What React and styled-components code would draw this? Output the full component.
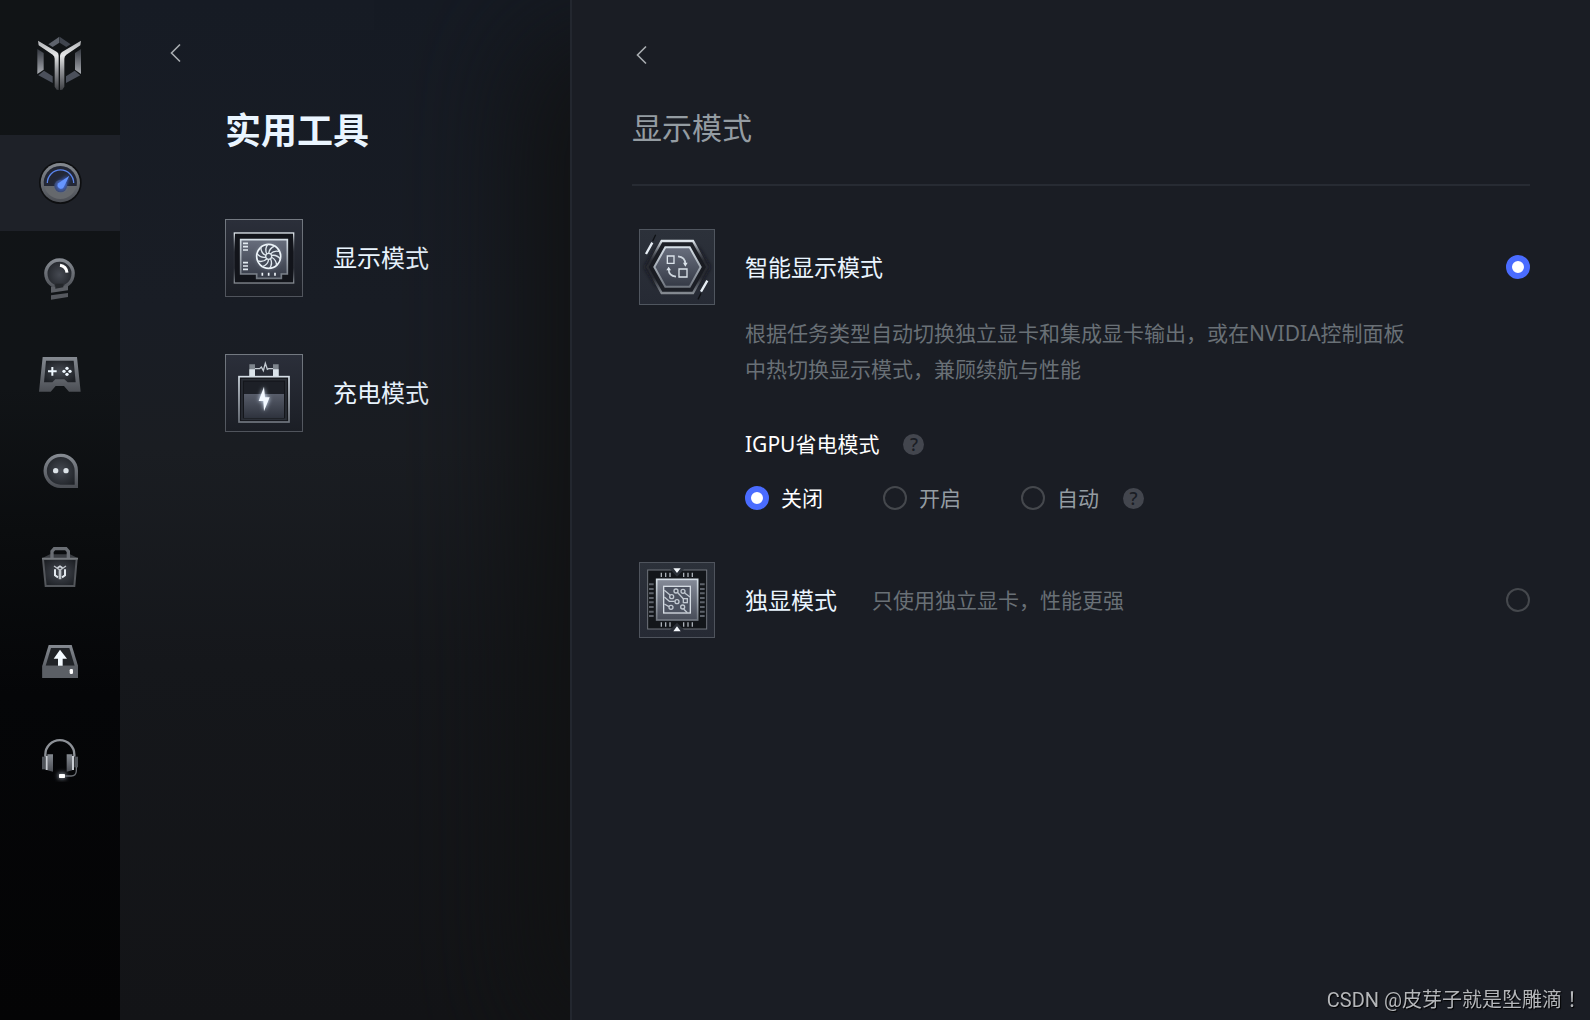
import React, { useState } from 'react';
import styled, { createGlobalStyle } from 'styled-components';

const colors = {
  panel: '#1a1d24',
  line: '#23272f',
  divider: '#272b33',
  heading: '#eaf5ff',
  text: '#ffffff',
  soft: '#949ca2',
  muted: '#697076',
  accent: '#4a6cff',
};

const GlobalStyle = createGlobalStyle`
  * {
    box-sizing: border-box;
  }

  body {
    margin: 0;
    background: ${colors.panel};
    color: ${colors.text};
    font-family: 'Noto Sans', 'Noto Sans CJK SC', sans-serif;
  }

  h1, h2, h3, p, ul {
    margin: 0;
    padding: 0;
    font-weight: 400;
  }
`;

const Layout = styled.div`
  display: grid;
  grid-template-columns: 120px 450px 1fr;
  min-height: 100vh;
`;

const Sidebar = styled.nav`
  background: linear-gradient(180deg, #111416 0%, #111417 38%, #0b0d0f 52%, #050608 68%, #040405 100%);
`;

const Brand = styled.div`
  display: flex;
  justify-content: center;
  height: 135px;
  padding: 36px 2px 0 0;
`;

const NavButton = styled.button`
  display: flex;
  align-items: center;
  justify-content: center;
  width: 100%;
  height: 96px;
  padding: 0;
  border: 0;
  background: ${({ $active }) => ($active ? '#1e2128' : 'transparent')};
  cursor: pointer;
`;

const ToolsPanel = styled.section`
  padding: 41px 24px 24px 46px;
  background: linear-gradient(180deg, #161b24 0%, #191d25 30%, #1a1d22 44%, #15171b 65%, #131417 100%);
`;

const DetailPanel = styled.main`
  padding: 43px 60px 24px;
  border-left: 2px solid ${colors.line};
  background: ${colors.panel};
  box-shadow: -50px 30px 120px #111213;
`;

const BackButton = styled.button`
  display: flex;
  align-items: center;
  justify-content: center;
  width: 20px;
  height: 24px;
  padding: 0;
  border: 0;
  background: none;
  color: #a9adb1;
  cursor: pointer;
`;

const ToolsBody = styled.div`
  padding-left: 59px;
`;

const ToolsTitle = styled.h1`
  margin: 46px 0 68px;
  font-size: 36px;
  font-weight: 700;
  line-height: 40px;
  color: ${colors.heading};
`;

const ToolList = styled.ul`
  display: grid;
  gap: 57px;
  list-style: none;
`;

const ToolButton = styled.button`
  display: flex;
  align-items: center;
  gap: 30px;
  padding: 0;
  border: 0;
  background: none;
  color: ${colors.heading};
  font: inherit;
  font-size: 24px;
  line-height: 36px;
  cursor: pointer;
`;

const DetailTitle = styled.h2`
  padding: 41px 0 36px;
  border-bottom: 2px solid ${colors.divider};
  font-size: 30px;
  line-height: 40px;
  color: ${colors.soft};
`;

const Modes = styled.div`
  display: grid;
  gap: 49px;
  padding: 43px 0 0 7px;
`;

const ModeHead = styled.label`
  display: flex;
  align-items: center;
  cursor: pointer;
`;

const ModeName = styled.span`
  margin-left: 30px;
  font-size: 23px;
  line-height: 36px;
  color: ${colors.heading};
`;

const ModeHint = styled.span`
  margin-left: 35px;
  font-size: 21px;
  line-height: 36px;
  color: ${colors.muted};
`;

const ModeBody = styled.div`
  padding: 10px 0 0 106px;
`;

const Description = styled.p`
  max-width: 670px;
  font-size: 21px;
  line-height: 36px;
  color: ${colors.muted};
`;

const OptionTitle = styled.div`
  display: flex;
  align-items: center;
  gap: 24px;
  margin: 42px 0 24px;
  font-size: 21px;
  line-height: 30px;
`;

const Options = styled.div`
  display: flex;
  gap: 60px;
`;

const OptionGroup = styled.div`
  display: flex;
  align-items: center;
  gap: 24px;
`;

const Option = styled.label`
  display: flex;
  align-items: center;
  gap: 12px;
  font-size: 21px;
  line-height: 30px;
  color: ${({ $active }) => ($active ? colors.text : colors.soft)};
  cursor: pointer;
`;

const Radio = styled.input.attrs({ type: 'radio' })`
  appearance: none;
  flex: none;
  width: 24px;
  height: 24px;
  margin: 0;
  border: 2px solid #45484d;
  border-radius: 50%;
  cursor: pointer;

  &:checked {
    border: 6px solid ${colors.accent};
    background: #fff;
  }
`;

const ModeRadio = styled(Radio)`
  margin-left: auto;
`;

const HelpButton = styled.button`
  width: 21px;
  height: 21px;
  padding: 0;
  border: 0;
  border-radius: 50%;
  background: #43464e;
  color: ${colors.panel};
  font: inherit;
  font-size: 18px;
  font-weight: 500;
  line-height: 21px;
  text-align: center;
  cursor: pointer;
`;

const Watermark = styled.div`
  position: fixed;
  right: 8px;
  bottom: 5px;
  font-family: Roboto, 'Noto Sans CJK TC', sans-serif;
  font-size: 20px;
  line-height: 30px;
  color: #b4b6b9;
  text-shadow: 1px 1px 1px #000;
  pointer-events: none;
`;

const HiddenSvg = styled.svg`
  position: absolute;
`;

const Chevron = () => (
  <svg width="20" height="24" viewBox="2 0 20 24" fill="none" stroke="currentColor" strokeWidth="1.6" aria-hidden="true">
    <path d="M16 3.5 7.5 12 16 20.5" />
  </svg>
);

// gradients and filters shared by all icons
const Defs = () => (
  <HiddenSvg width="0" height="0" aria-hidden="true">
    <defs>
      <linearGradient id="metal" x1="0" y1="0" x2="0" y2="1">
        <stop offset="0" stopColor="#858a91" />
        <stop offset="1" stopColor="#4b4e54" />
      </linearGradient>
      <linearGradient id="silver" x1="0" y1="0" x2="0" y2="1">
        <stop offset="0" stopColor="#b0b2b5" />
        <stop offset="0.3" stopColor="#e6e7e8" />
        <stop offset="0.6" stopColor="#94969a" />
        <stop offset="1" stopColor="#3d3f43" />
      </linearGradient>
      <linearGradient id="side" x1="0" y1="0" x2="0" y2="1">
        <stop offset="0" stopColor="#343840" />
        <stop offset="1" stopColor="#a9acb1" />
      </linearGradient>
      <radialGradient id="well" cx="0.5" cy="0.5" r="0.6">
        <stop offset="0" stopColor="#454951" />
        <stop offset="1" stopColor="#1d2025" />
      </radialGradient>
      <linearGradient id="tile" x1="0" y1="0" x2="0" y2="1">
        <stop offset="0" stopColor="#2b2f3a" />
        <stop offset="1" stopColor="#1b1e25" />
      </linearGradient>
      <linearGradient id="modeTile" x1="0" y1="0" x2="0" y2="1">
        <stop offset="0" stopColor="#2c313a" />
        <stop offset="1" stopColor="#262a34" />
      </linearGradient>
      <linearGradient id="tileEdge" x1="0" y1="0" x2="0" y2="1">
        <stop offset="0" stopColor="#737981" />
        <stop offset="1" stopColor="#50545c" />
      </linearGradient>
      <linearGradient id="frame" x1="0" y1="0" x2="0" y2="1">
        <stop offset="0" stopColor="#dfe6ec" />
        <stop offset="0.38" stopColor="#5f656d" stopOpacity="0.2" />
        <stop offset="0.7" stopColor="#5f656d" stopOpacity="0.2" />
        <stop offset="1" stopColor="#858a91" />
      </linearGradient>
      <linearGradient id="plate" x1="0" y1="0" x2="0" y2="1">
        <stop offset="0" stopColor="#686e7d" />
        <stop offset="1" stopColor="#353a46" />
      </linearGradient>
      <linearGradient id="chip" x1="0" y1="0" x2="0" y2="1">
        <stop offset="0" stopColor="#858b98" />
        <stop offset="1" stopColor="#474c58" />
      </linearGradient>
      <linearGradient id="bright" x1="0" y1="0" x2="0" y2="1">
        <stop offset="0" stopColor="#d5dee6" />
        <stop offset="1" stopColor="#70767f" />
      </linearGradient>
      <filter id="glow" x="-80%" y="-80%" width="260%" height="260%">
        <feGaussianBlur stdDeviation="6" />
      </filter>
    </defs>
  </HiddenSvg>
);

const Logo = () => (
  <svg width="46" height="55" viewBox="108 108 138 165" role="img" aria-label="logo">
    <path d="M178 110V128L158 141 145 133Z" fill="#5e636c" />
    <path d="M179 110V128L199 141 212 133Z" fill="#3f444d" />
    <path d="M112 147 131 159V209L112 222Z" fill="url(#side)" />
    <path d="M243 147 225 159V209L243 222Z" fill="url(#side)" />
    <path d="M115 226 132 212 158 229V249Z" fill="#4b505b" />
    <path d="M241 226 224 212 198 229V249Z" fill="#4b505b" />
    <path d="M114 122 171 156Q177 160 177 168V270L170 269 164 260V176Q164 168 158 164L116 136Z" fill="url(#silver)" />
    <path d="M243 122 186 156Q180 160 180 168V270L187 269 193 260V176Q193 168 199 164L241 136Z" fill="url(#silver)" />
    <path d="M178 160V270" stroke="#111416" strokeWidth="4" />
  </svg>
);

const NavIcon = ({ box, children }) => (
  <svg width="46" height="46" viewBox={`${box} 138 138`} fill="none" aria-hidden="true">
    {children}
  </svg>
);

const GaugeIcon = () => (
  <NavIcon box="111 480">
    <circle cx="181" cy="548" r="64" fill="#0d0e10" />
    <circle cx="181" cy="548" r="59" fill="url(#metal)" />
    <circle cx="181" cy="548" r="49" fill="#65686c" />
    <path d="M132 558A50 50 0 1 1 230 558Z" fill="#232735" />
    <path d="M142 549A39.5 39.5 0 0 1 221 549" stroke="#5b86ee" strokeWidth="4" />
    <circle cx="182" cy="558" r="19" fill="#3a4768" />
    <path d="M208 527 193 564A12 12 0 1 1 174 549Z" fill="#4a78ff" filter="url(#glow)" />
    <path d="M208 527 191 562A10 10 0 1 1 175 550Z" fill="#6695ff" />
  </NavIcon>
);

const BulbIcon = () => (
  <NavIcon box="51 48">
    <path
      d="M99 148V137A41 41 0 1 1 138 137V143Z"
      fill="url(#well)"
      stroke="url(#metal)"
      strokeWidth="10"
    />
    <path d="M93 141 144 136V151L93 158Z" fill="#5c5f65" />
    <path d="M106 131H130V142L106 146Z" fill="#24272b" />
    <path d="M93 166 144 159V171L93 179Z" fill="#55585e" />
    <path d="M120 76Q139 79 141 98" stroke="#fff" strokeWidth="9" />
  </NavIcon>
);

const GamepadIcon = () => (
  <NavIcon box="51 336">
    <path d="M68 351H171L182 455H147L132 438H107L92 455H57Z" fill="url(#metal)" />
    <path d="M78 362H161L167 427H143L133 418H106L97 427H72Z" fill="url(#well)" />
    <path d="M97 381V407M84 394H110" stroke="#eff8ff" strokeWidth="6" />
    <g fill="#eff8ff">
      <circle cx="141" cy="385" r="5" />
      <circle cx="141" cy="403" r="5" />
      <circle cx="132" cy="394" r="5" />
      <circle cx="150" cy="394" r="5" />
    </g>
  </NavIcon>
);

const ChatIcon = () => (
  <NavIcon box="51 624">
    <path
      d="M122 646A46 46 0 0 0 122 739H169V692A46 46 0 0 0 122 646Z"
      fill="url(#well)"
      stroke="url(#metal)"
      strokeWidth="10"
    />
    <circle cx="107" cy="692" r="8" fill="#dde3e8" />
    <circle cx="138" cy="692" r="8" fill="#dde3e8" />
  </NavIcon>
);

const BagIcon = () => (
  <NavIcon box="51 72">
    <path d="M66 115 90 103H150L174 115Z" fill="#3a3d42" />
    <path d="M96 115V94L103 86H138L145 94V115" stroke="#6a6e74" strokeWidth="10" />
    <path d="M69 117H170L163 198H77Z" fill="url(#well)" stroke="#53565b" strokeWidth="6" />
    <path d="M66 116H174" stroke="#74787d" strokeWidth="5" />
    <path d="M112 144 120 139 128 144" stroke="#cdd3da" strokeWidth="5" />
    <path d="M105 148V166L114 172M135 148V166L126 172" stroke="#e3e9ef" strokeWidth="6" />
    <path d="M102 138 118 149V178M138 138 122 149V178" stroke="#bec3c9" strokeWidth="4" />
  </NavIcon>
);

const DriveIcon = () => (
  <NavIcon box="51 360">
    <path d="M86 375H155L174 437V474H67V437Z" fill="url(#metal)" />
    <path d="M93 384H148L164 437H77Z" fill="#202327" />
    <path d="M67 437H174V474H67Z" fill="#5b5f65" />
    <path d="M120 389 141 416H128V437H114V416H101Z" fill="#f3faff" />
    <rect x="149" y="447" width="10" height="15" rx="4" fill="#fff" />
  </NavIcon>
);

const HeadsetIcon = () => (
  <NavIcon box="51 648">
    <path d="M76 710V704A43 43 0 0 1 163 704V710" stroke="#8d9197" strokeWidth="7" />
    <path d="M66 710H77V748H66Z" fill="#50545a" />
    <path d="M82 703H99V755L82 751Z" fill="url(#metal)" />
    <path d="M77 708H83V750H77Z" fill="#c9cdd3" />
    <path d="M163 710H174V742H163Z" fill="#50545a" />
    <path d="M140 703H157V751L140 755Z" fill="url(#metal)" />
    <path d="M156 708H162V750H156Z" fill="#c9cdd3" />
    <path d="M169 741V753Q168 768 154 768H136" stroke="#6b6f75" strokeWidth="4" />
    <rect x="114" y="758" width="24" height="19" fill="#6f7680" filter="url(#glow)" />
    <rect x="117" y="762" width="18" height="12" rx="2" fill="#fff" />
  </NavIcon>
);

const GpuTile = () => (
  <svg width="78" height="78" viewBox="45 387 234 234" fill="none" aria-hidden="true">
    <rect x="46.5" y="388.5" width="231" height="231" fill="url(#tile)" stroke="url(#tileEdge)" strokeWidth="3" />
    <rect x="73" y="429" width="178" height="150" fill="#12141a" stroke="url(#frame)" strokeWidth="4" />
    <path d="M92 449H232V552H214V565H140V552H92Z" fill="url(#plate)" stroke="url(#bright)" strokeWidth="5" />
    <path
      d="M99 460H114M99 470H114M99 480H114M99 518H114M99 528H114M99 538H114"
      stroke="#e2e9f0"
      strokeWidth="5"
    />
    <path d="M157 548V557M176 548V557M195 548V557" stroke="#f0f5fa" strokeWidth="5" />
    <circle cx="176" cy="499" r="38" fill="#8d95a5" opacity="0.5" filter="url(#glow)" />
    <circle cx="176" cy="499" r="36" fill="#454b59" stroke="#eef5fa" strokeWidth="5" />
    <circle cx="176" cy="499" r="9" stroke="#dfe7ee" strokeWidth="4" />
    {Array.from({ length: 10 }, (_, i) => (
      <path
        key={i}
        d="M176 490Q178 474 195 468"
        stroke="#dfe7ee"
        strokeWidth="4"
        transform={`rotate(${i * 36} 176 499)`}
      />
    ))}
  </svg>
);

const BatteryTile = () => (
  <svg width="78" height="78" viewBox="45 42 234 234" fill="none" aria-hidden="true">
    <rect x="46.5" y="43.5" width="231" height="231" fill="url(#tile)" stroke="url(#tileEdge)" strokeWidth="3" />
    <path d="M118 73H135V108H118ZM189 73H206V108H189Z" fill="#7e858d" />
    <path d="M118 88H135V108H118ZM189 88H206V108H189Z" fill="#dbe4eb" />
    <path d="M135 86H149L154 81 160 92 166 70 172 88 176 86H189" stroke="#c3cad1" strokeWidth="4" />
    <rect x="87" y="110" width="150" height="136" fill="#14161b" stroke="url(#bright)" strokeWidth="5" />
    <rect x="96" y="119" width="132" height="119" stroke="#2b2f37" strokeWidth="5" />
    <rect x="102" y="125" width="120" height="38" fill="#1d2027" />
    <rect x="102" y="162" width="120" height="72" fill="url(#plate)" opacity="0.8" />
    <path d="M162 140 146 183H160L162 214 179 172H165Z" fill="#d9e9ff" filter="url(#glow)" />
    <path d="M162 140 146 183H160L162 214 179 172H165Z" fill="#f2f8ff" />
  </svg>
);

const SwitchTile = () => (
  <svg width="76" height="76" viewBox="27 27 228 228" fill="none" aria-hidden="true">
    <rect x="28.5" y="28.5" width="225" height="225" fill="url(#modeTile)" stroke="#50565f" strokeWidth="3" />
    <path d="M44 141 82 78V204ZM240 141 202 78V204Z" fill="#14161b" filter="url(#glow)" />
    <path
      d="M95 63H189L232 141 189 219H95L52 141Z"
      fill="#1a1d23"
      fillOpacity="0.8"
      stroke="url(#frame)"
      strokeWidth="7"
    />
    <path d="M106 82H179L212 141 179 200H106L73 141Z" fill="url(#plate)" stroke="url(#bright)" strokeWidth="6" />
    <path d="M48 102 67 68M213 215 232 182" stroke="#e6edf4" strokeWidth="7" />
    <path d="M68 63 77 44M204 238 213 220" stroke="#0f1115" strokeWidth="4" />
    <path d="M112 108H132V130H112ZM147 147H171V171H147Z" stroke="#dbe3ea" strokeWidth="4" />
    <path d="M144 109Q166 111 166 132M138 170Q116 168 116 148" stroke="#cfd7df" strokeWidth="5" />
    <path d="M159 128H173L166 140ZM109 151H123L116 140Z" fill="#dbe3ea" />
  </svg>
);

const sidePins = [104, 118, 131, 145, 158, 172, 186, 199];
const edgePins = [94, 107, 120, 161, 174, 187];

const ChipTile = () => (
  <svg width="76" height="76" viewBox="27 37 228 228" fill="none" aria-hidden="true">
    <rect x="28.5" y="38.5" width="225" height="225" fill="url(#modeTile)" stroke="#4f545d" strokeWidth="3" />
    <rect x="53" y="61" width="177" height="177" fill="#13161a" stroke="#70757d" strokeWidth="3" />
    {sidePins.map((y) => (
      <path key={y} d={`M57 ${y}H71M210 ${y}H224`} stroke="#5d626a" strokeWidth="6" />
    ))}
    {edgePins.map((x) => (
      <path key={x} d={`M${x} 69V82M${x} 218V231`} stroke="#a9afb6" strokeWidth="4" />
    ))}
    <path d="M120 59H162L141 81ZM120 241H162L141 219Z" fill="#2b3038" />
    <path d="M130 56H152L141 70ZM130 245H152L141 230Z" fill="#f3f7fb" />
    <rect x="80" y="89" width="123" height="122" fill="url(#chip)" stroke="url(#bright)" strokeWidth="5" />
    <rect x="101" y="110" width="80" height="80" fill="#4c5260" stroke="#d5dce3" strokeWidth="4" />
    <g stroke="#c2c9d1" strokeWidth="4">
      <path d="M103 122 121 137M103 142 118 155H134M103 163 117 171M142 128 160 147M164 130 180 142M161 178 172 189" />
      <circle cx="125" cy="141" r="6" />
      <circle cx="138" cy="124" r="6" />
      <circle cx="159" cy="125" r="6" />
      <circle cx="141" cy="156" r="6" />
      <circle cx="123" cy="173" r="6" />
      <circle cx="158" cy="172" r="6" />
      <rect x="160" y="147" width="12" height="12" />
    </g>
  </svg>
);

const navItems = [
  { id: 'performance', label: '性能', icon: <GaugeIcon /> },
  { id: 'light', label: '灯光', icon: <BulbIcon /> },
  { id: 'game', label: '游戏', icon: <GamepadIcon /> },
  { id: 'community', label: '社区', icon: <ChatIcon /> },
  { id: 'store', label: '商城', icon: <BagIcon /> },
  { id: 'update', label: '更新', icon: <DriveIcon /> },
  { id: 'support', label: '客服', icon: <HeadsetIcon /> },
];

const tools = [
  { name: '显示模式', icon: <GpuTile /> },
  { name: '充电模式', icon: <BatteryTile /> },
];

const igpuOptions = [
  { id: 'off', name: '关闭' },
  { id: 'on', name: '开启' },
  { id: 'auto', name: '自动', help: true },
];

const App = () => {
  const [page, setPage] = useState('performance');
  const [mode, setMode] = useState('smart');
  const [igpu, setIgpu] = useState('off');

  return (
    <>
      <GlobalStyle />
      <Defs />
      <Layout>
        <Sidebar>
          <Brand>
            <Logo />
          </Brand>
          {navItems.map((item) => (
            <NavButton
              key={item.id}
              aria-label={item.label}
              $active={page === item.id}
              onClick={() => setPage(item.id)}
            >
              {item.icon}
            </NavButton>
          ))}
        </Sidebar>

        <ToolsPanel>
          <BackButton aria-label="返回">
            <Chevron />
          </BackButton>
          <ToolsBody>
            <ToolsTitle>实用工具</ToolsTitle>
            <ToolList>
              {tools.map((tool) => (
                <li key={tool.name}>
                  <ToolButton>
                    {tool.icon}
                    {tool.name}
                  </ToolButton>
                </li>
              ))}
            </ToolList>
          </ToolsBody>
        </ToolsPanel>

        <DetailPanel>
          <BackButton aria-label="返回">
            <Chevron />
          </BackButton>
          <DetailTitle>显示模式</DetailTitle>
          <Modes>
            <section>
              <ModeHead>
                <SwitchTile />
                <ModeName>智能显示模式</ModeName>
                <ModeRadio name="mode" checked={mode === 'smart'} onChange={() => setMode('smart')} />
              </ModeHead>
              <ModeBody>
                <Description>
                  根据任务类型自动切换独立显卡和集成显卡输出，或在NVIDIA控制面板中热切换显示模式，兼顾续航与性能
                </Description>
                <OptionTitle>
                  <span id="igpu-title">IGPU省电模式</span>
                  <HelpButton aria-label="IGPU省电模式说明">?</HelpButton>
                </OptionTitle>
                <Options role="radiogroup" aria-labelledby="igpu-title">
                  {igpuOptions.map((option) => (
                    <OptionGroup key={option.id}>
                      <Option $active={igpu === option.id}>
                        <Radio name="igpu" checked={igpu === option.id} onChange={() => setIgpu(option.id)} />
                        {option.name}
                      </Option>
                      {option.help && <HelpButton aria-label="自动模式说明">?</HelpButton>}
                    </OptionGroup>
                  ))}
                </Options>
              </ModeBody>
            </section>

            <ModeHead>
              <ChipTile />
              <ModeName>独显模式</ModeName>
              <ModeHint>只使用独立显卡，性能更强</ModeHint>
              <ModeRadio name="mode" checked={mode === 'discrete'} onChange={() => setMode('discrete')} />
            </ModeHead>
          </Modes>
        </DetailPanel>
      </Layout>
      <Watermark>CSDN @皮芽子就是坠雕滴！</Watermark>
    </>
  );
};

export default App;
